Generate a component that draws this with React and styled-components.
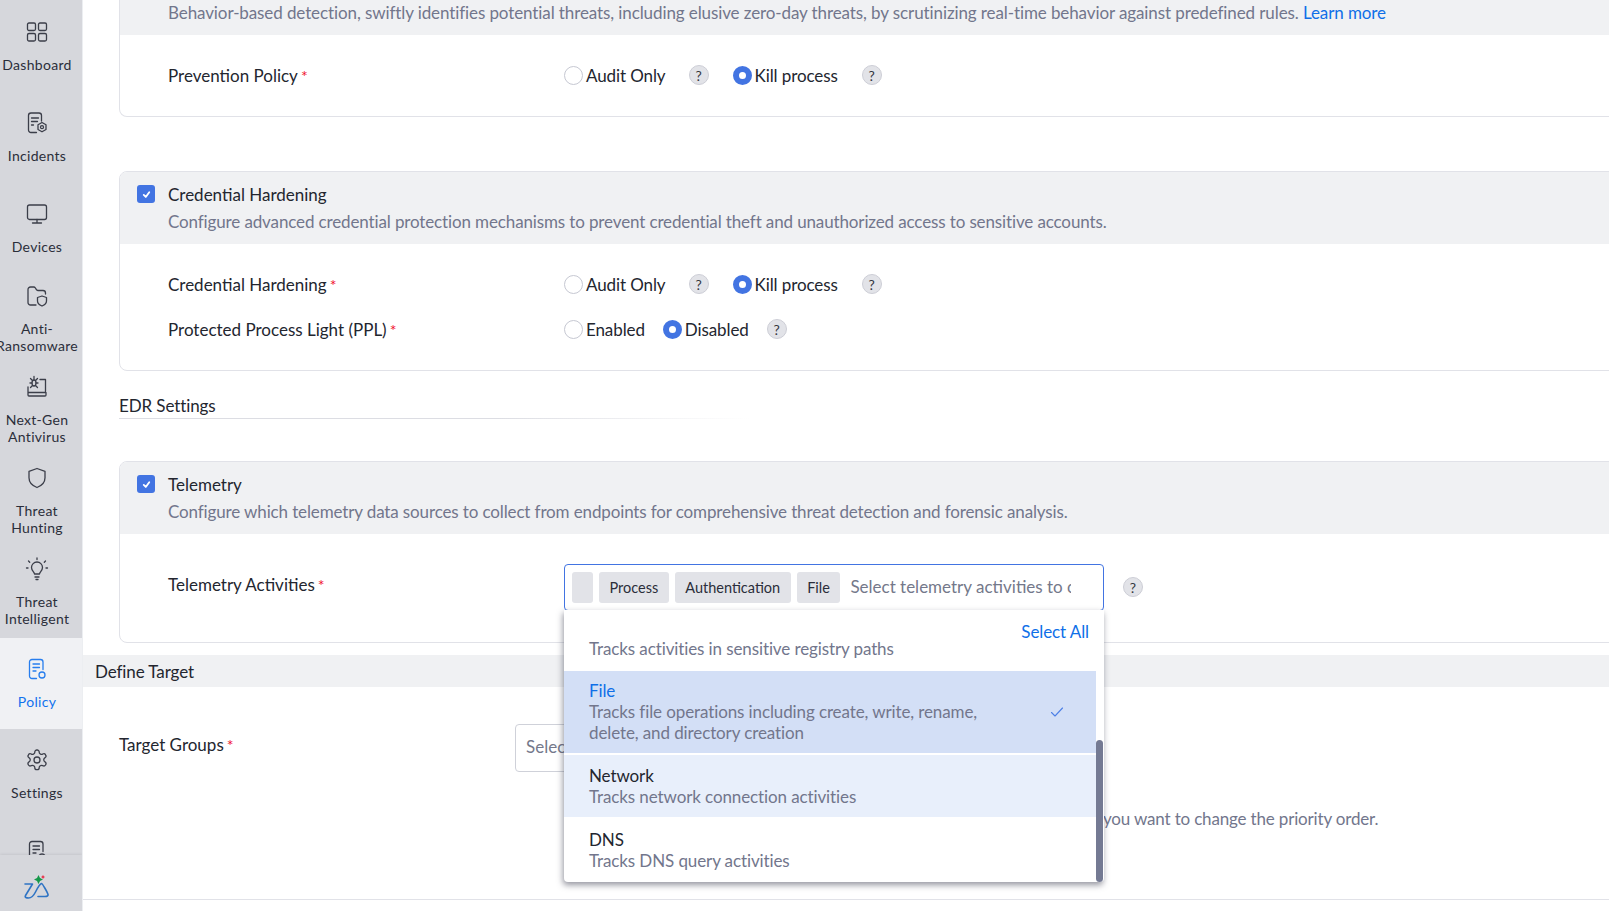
import React from "react";
import styled, { createGlobalStyle } from "styled-components";

const GlobalStyle = createGlobalStyle`
  html, body {
    margin: 0;
    padding: 0;
    background: #fff;
  }
  * {
    box-sizing: border-box;
  }
`;

const Page = styled.div`
  display: flex;
  width: 1609px;
  height: 911px;
  overflow: hidden;
  background: #fff;
  color: #23262f;
  font-family: Lato, "Liberation Sans", sans-serif;
  font-size: 17px;
`;

/* sidebar */
const Sidebar = styled.aside`
  display: flex;
  flex-direction: column;
  flex: 0 0 82px;
  height: 911px;
  background: #d6d7dc;
  overflow: hidden;
`;

const NavList = styled.nav`
  flex: 1;
  min-height: 0;
  padding-top: 1px;
  overflow: hidden;
`;

const NavItem = styled.a`
  display: flex;
  flex-direction: column;
  justify-content: center;
  align-items: center;
  height: 91px;
  padding: 0 8px 1px 0;
  gap: 12px;
  background: ${(p) => (p.$active ? "#f0f1f4" : "transparent")};
  color: ${(p) => (p.$active ? "#1272ee" : "#2b2e3a")};
`;

const NavLabel = styled.span`
  min-height: 17px;
  font-size: 14px;
  line-height: 17px;
  letter-spacing: 0.3px;
  text-align: center;
`;

const NavIcon = styled.svg`
  flex: 0 0 24px;
  width: 24px;
  height: 24px;
  fill: none;
  stroke: currentColor;
  stroke-width: 1.3;
  stroke-linecap: round;
  stroke-linejoin: round;
  opacity: 0.9;
`;

const SideFooter = styled.div`
  display: flex;
  flex: 0 0 56px;
  align-items: center;
  justify-content: center;
  padding: 8px 8px 0 0;
  background: #d6d7dc;
  box-shadow: 0 -1px 2px rgba(90, 92, 110, 0.12);
  position: relative;
`;

/* main */
const Main = styled.main`
  flex: 1;
  min-width: 0;
  overflow: hidden;
  border-left: 1px solid #eceef1;
`;

const Section = styled.div`
  padding-left: 36px;
`;

const Card = styled.section`
  margin: ${(p) => p.$top || "0"} -20px 0 0;
  border: 1px solid #e1e2e8;
  border-top-width: ${(p) => (p.$flush ? "0" : "1px")};
  border-radius: ${(p) => (p.$flush ? "0 0 8px 8px" : "8px")};
`;

const CardHead = styled.header`
  display: flex;
  gap: 13px;
  padding: ${(p) => (p.$flush ? "0 0 10px 48px" : "9px 0 9px 17px")};
  background: #f0f1f3;
  border-radius: ${(p) => (p.$flush ? "0" : "7px 7px 0 0")};
`;

const CheckBox = styled.span`
  display: flex;
  flex: 0 0 18px;
  align-items: center;
  justify-content: center;
  width: 18px;
  height: 18px;
  margin-top: 4px;
  border-radius: 3px;
  background: #4274e2;
`;

const HeadTitle = styled.div`
  font-size: 17px;
  line-height: 27px;
`;

const HeadDesc = styled.div`
  color: #72768c;
  font-size: 17px;
  line-height: ${(p) => (p.$flush ? "25px" : "27px")};
  letter-spacing: ${(p) => (p.$flush ? "-0.1px" : "-0.13px")};
`;

const LearnMore = styled.a`
  color: #0f6fe8;
`;

const CardBody = styled.div`
  display: flex;
  flex-direction: column;
  gap: 15px;
  padding: ${(p) => p.$pad};
`;

const Row = styled.div`
  display: flex;
  align-items: ${(p) => (p.$top ? "flex-start" : "center")};
  min-height: 30px;
  padding-bottom: ${(p) => (p.$top ? "0" : "2px")};
`;

const Label = styled.div`
  flex: 0 0 ${(p) => p.$width || "444px"};
  margin-top: ${(p) => p.$offset || "0"};
  padding-left: ${(p) => p.$indent || "48px"};
  font-size: 17px;
  line-height: 28px;
`;

const Star = styled.span`
  margin-left: 3px;
  color: #f0142f;
  font-size: 16px;
  line-height: 0;
`;

const RadioOption = styled.label`
  display: flex;
  align-items: center;
  gap: 3px;
  padding-bottom: 2px;
  margin-left: ${(p) => p.$gap || "0"};
  letter-spacing: -0.1px;
`;

const RadioDot = styled.span`
  display: block;
  width: 19px;
  height: 19px;
  border-radius: 50%;
  border: ${(p) => (p.$on ? "6.5px solid #4274e2" : "1px solid #c6c8d2")};
  background: #fff;
`;

const Help = styled.span`
  display: flex;
  flex: 0 0 20px;
  align-items: center;
  justify-content: center;
  width: 20px;
  height: 20px;
  margin-top: ${(p) => p.$offset || "-2px"};
  margin-left: ${(p) => p.$gap || "23px"};
  border: 1px solid #cdced6;
  border-radius: 50%;
  background: #e2e3e8;
  font-size: 14px;
  color: #33363f;
`;

const SectionTitle = styled.h3`
  width: 631px;
  height: 25px;
  margin: 23px 0 42px;
  font-size: 17px;
  font-weight: 400;
  line-height: 23px;
  letter-spacing: -0.1px;
  background: linear-gradient(90deg, #dcdde3 60%, #fff) left bottom / 100% 1px no-repeat;
`;

const SelectWrap = styled.div`
  position: relative;
  flex: 0 0 540px;
  width: 540px;
  min-width: 0;
`;

const SelectBox = styled.div`
  display: flex;
  align-items: center;
  gap: 6px;
  height: 47px;
  padding: 0 32px 0 7px;
  border: 1px solid #4274e2;
  border-radius: 4px;
  overflow: hidden;
`;

const Chip = styled.span`
  display: flex;
  flex: 0 0 auto;
  align-items: center;
  height: 31px;
  min-width: 21px;
  padding: 0 10.5px;
  border-radius: 3px;
  background: #e2e3e8;
  font-size: 14.5px;
  color: #2b2e3a;
`;

const Placeholder = styled.span`
  flex: 1;
  min-width: 0;
  margin-left: 4px;
  margin-top: -2px;
  overflow: hidden;
  white-space: nowrap;
  color: #74788a;
`;

const Dropdown = styled.div`
  position: absolute;
  z-index: 5;
  top: 46px;
  left: 0;
  width: 540px;
  height: 272px;
  padding-top: 28px;
  background: #fff;
  border-radius: 0 0 4px 4px;
  box-shadow: -1px 3px 6px rgba(60, 62, 80, 0.55);
`;

const SelectAll = styled.a`
  position: absolute;
  top: 11px;
  right: 15px;
  color: #0f6fe8;
  line-height: 21px;
  letter-spacing: -0.1px;
`;

const Option = styled.div`
  display: flex;
  align-items: center;
  justify-content: space-between;
  width: 532px;
  margin-bottom: 2px;
  padding: ${(p) => p.$pad || "10px 31px 10px 25px"};
  background: ${(p) => p.$bg || "transparent"};
`;

const OptionText = styled.div`
  width: 410px;
  font-size: 17px;
  line-height: 21px;
  letter-spacing: -0.11px;
`;

const OptionTitle = styled.div`
  color: ${(p) => (p.$selected ? "#0f6fe8" : "#23262f")};
`;

const OptionDesc = styled.div`
  color: #72768c;
`;

const ScrollThumb = styled.span`
  position: absolute;
  top: 130px;
  right: 1px;
  bottom: 0;
  width: 7px;
  border-radius: 4px;
  background: #747a93;
`;

const DefineBar = styled.div`
  height: 32px;
  margin-top: 12px;
  padding-left: 12px;
  background: #f0f1f3;
  font-size: 17px;
  line-height: 34px;
  letter-spacing: -0.1px;
`;

const TargetArea = styled.div`
  padding: 37px 0 68px 36px;
  border-bottom: 1px solid #e1e2e8;
`;

const TargetInput = styled.div`
  flex: 0 0 560px;
  height: 48px;
  padding-left: 10px;
  border: 1px solid #cfd1d9;
  border-radius: 4px;
  color: #74788a;
  line-height: 44px;
`;

const Hint = styled.div`
  margin: 35px 0 0 984px;
  color: #72768c;
  line-height: 24px;
  letter-spacing: -0.17px;
`;

const Check = () => (
  <svg width="11" height="11" viewBox="0 0 12 12" fill="none" stroke="#fff" strokeWidth="2" strokeLinecap="round" strokeLinejoin="round">
    <path d="M3 6.500l2.200 2.200L9 3.500" />
  </svg>
);

const icons = {
  dashboard: (
    <>
      <rect x="2.500" y="3" width="8" height="7.500" rx="1.500" />
      <rect x="13.500" y="3" width="8" height="7.500" rx="1.500" />
      <rect x="2.500" y="13.500" width="8" height="7.500" rx="1.500" />
      <rect x="13.500" y="13.500" width="8" height="7.500" rx="1.500" />
    </>
  ),
  incidents: (
    <>
      <path d="M11.500 21.500H6A2.500 2.500 0 0 1 3.500 19V4.500A2.500 2.500 0 0 1 6 2h8A2.500 2.500 0 0 1 16.500 4.500V10" />
      <path d="M6.500 7h7M6.500 10.500h6M6.500 14h2" />
      <path d="M17 11.500l4 2.300v4.700l-4 2.300-4-2.300v-4.700z" />
      <circle cx="17" cy="16.200" r="1.500" />
    </>
  ),
  devices: (
    <>
      <rect x="2.500" y="3" width="19" height="14.500" rx="2" />
      <path d="M12 17.500V21M7.500 21h9" />
    </>
  ),
  folder: (
    <>
      <path d="M11 21H5.500A2.500 2.500 0 0 1 3 18.500v-13A2.500 2.500 0 0 1 5.500 3h3.200c.7 0 1.300.4 1.700 1l1 1.700c.3.5.8.8 1.400.8h5.200A2.500 2.500 0 0 1 20.500 9v1" />
      <path d="M17 12l4.500 1.500v3.500c0 2.500-2 4-4.500 5-2.500-1-4.500-2.500-4.500-5v-3.500z" />
    </>
  ),
  antivirus: (
    <>
      <path d="M15 4.500h5.500v12M3 12v5.500M3 17.500h18v2.500c0 .6-.4 1-1 1H4c-.6 0-1-.4-1-1z" />
      <ellipse cx="9" cy="8" rx="2" ry="3" />
      <path d="M9 1.500v3M5.500 3.500l2 2M12.500 3.500l-2 2M5 8h2M11 8h2M5.500 12.500l2-2M12.500 12.500l-2-2" />
    </>
  ),
  shield: <path d="M12 2.500l8 2.800v6.500c0 4.800-3.500 8-8 9.700-4.500-1.700-8-4.900-8-9.700V5.300z" />,
  bulb: (
    <>
      <path d="M9.500 17c0-2-3-3.200-3-6.500a5.500 5.500 0 0 1 11 0c0 3.300-3 4.500-3 6.500z" />
      <path d="M10 20h4M11 22.500h2M12 1v1.500M3.500 4l1.200 1.200M20.500 4l-1.200 1.200M1.500 11H3M21 11h1.500" />
    </>
  ),
  policy: (
    <>
      <path d="M11.500 21.500H7A2.500 2.500 0 0 1 4.500 19V5A2.500 2.500 0 0 1 7 2.500h8.500A2.500 2.500 0 0 1 18 5v7.500" />
      <path d="M8 7h6.500M8 10.500h6.500M8 14h3" />
      <circle cx="17" cy="18" r="3" />
    </>
  ),
  settings: (
    <>
      <path d="M12.200 2h-.4a2 2 0 0 0-2 2v.2a2 2 0 0 1-1 1.700l-.4.200a2 2 0 0 1-2 0l-.2-.1a2 2 0 0 0-2.700.7l-.2.4a2 2 0 0 0 .7 2.700l.2.100a2 2 0 0 1 1 1.700v.5a2 2 0 0 1-1 1.700l-.2.100a2 2 0 0 0-.7 2.700l.2.400a2 2 0 0 0 2.700.7l.2-.1a2 2 0 0 1 2 0l.4.200a2 2 0 0 1 1 1.700v.2a2 2 0 0 0 2 2h.4a2 2 0 0 0 2-2v-.2a2 2 0 0 1 1-1.700l.4-.200a2 2 0 0 1 2 0l.2.100a2 2 0 0 0 2.700-.7l.2-.4a2 2 0 0 0-.7-2.700l-.2-.1a2 2 0 0 1-1-1.700v-.5a2 2 0 0 1 1-1.700l.2-.1a2 2 0 0 0 .7-2.700l-.2-.4a2 2 0 0 0-2.700-.7l-.2.100a2 2 0 0 1-2 0l-.4-.2a2 2 0 0 1-1-1.700V4a2 2 0 0 0-2-2z" />
      <circle cx="12" cy="12" r="3" />
    </>
  ),
};

const navItems = [
  { icon: "dashboard", label: "Dashboard" },
  { icon: "incidents", label: "Incidents" },
  { icon: "devices", label: "Devices" },
  { icon: "folder", label: "Anti-Ransomware" },
  { icon: "antivirus", label: "Next-Gen Antivirus" },
  { icon: "shield", label: "Threat Hunting" },
  { icon: "bulb", label: "Threat Intelligent" },
  { icon: "policy", label: "Policy", active: true },
  { icon: "settings", label: "Settings" },
  { icon: "policy", label: "" },
];

const Radio = ({ on, gap, children }) => (
  <RadioOption $gap={gap}>
    <RadioDot $on={on} />
    {children}
  </RadioOption>
);

const AuditRow = ({ label }) => (
  <Row>
    <Label>
      {label}
      <Star>*</Star>
    </Label>
    <Radio>Audit Only</Radio>
    <Help>?</Help>
    <Radio on gap="24px">
      Kill process
    </Radio>
    <Help $gap="24px">?</Help>
  </Row>
);

const ZiaLogo = () => (
  <svg width="26" height="25" viewBox="0 0 26 25" fill="none">
    <path
      d="M1 9h7.500L1.500 20.500c-1 2 1 2.500 3 2.500 3 0 5-2 7-6 2-4 4-8 6-8.500 1 0 6 9 6.500 11 .3 1.500-1 2-3 2h-7"
      stroke="#2f74c4"
      strokeWidth="1.600"
      strokeLinecap="round"
      strokeLinejoin="round"
    />
    <path d="M14.500 0l1.500 3 3 1.500-3 1.500-1.500 3-1.500-3-3-1.500 3-1.500z" fill="#16994a" />
    <path d="M19 0l.8 1.200 1.200.8-1.200.8L19 4l-.8-1.200L17 2l1.200-.8z" fill="#e8344a" />
  </svg>
);

export default function App() {
  return (
    <Page>
      <GlobalStyle />
      <Sidebar>
        <NavList>
          {navItems.map((item) => (
            <NavItem key={item.label} $active={item.active}>
              <NavIcon viewBox="0 0 24 24">{icons[item.icon]}</NavIcon>
              <NavLabel>{item.label}</NavLabel>
            </NavItem>
          ))}
        </NavList>
        <SideFooter>
          <ZiaLogo />
        </SideFooter>
      </Sidebar>

      <Main>
        <Section>
          <Card $flush>
            <CardHead $flush>
              <HeadDesc $flush>
                Behavior-based detection, swiftly identifies potential threats, including elusive zero-day threats, by scrutinizing real-time behavior against predefined rules.{" "}
                <LearnMore>Learn more</LearnMore>
              </HeadDesc>
            </CardHead>
            <CardBody $pad="27px 0 24px">
              <AuditRow label="Prevention Policy" />
            </CardBody>
          </Card>

          <Card $top="54px">
            <CardHead>
              <CheckBox>
                <Check />
              </CheckBox>
              <div>
                <HeadTitle>Credential Hardening</HeadTitle>
                <HeadDesc>Configure advanced credential protection mechanisms to prevent credential theft and unauthorized access to sensitive accounts.</HeadDesc>
              </div>
            </CardHead>
            <CardBody $pad="27px 0 24px">
              <AuditRow label="Credential Hardening" />
              <Row>
                <Label>
                  Protected Process Light (PPL)
                  <Star>*</Star>
                </Label>
                <Radio>Enabled</Radio>
                <Radio on gap="18px">
                  Disabled
                </Radio>
                <Help $gap="18px">?</Help>
              </Row>
            </CardBody>
          </Card>

          <SectionTitle>EDR Settings</SectionTitle>

          <Card>
            <CardHead>
              <CheckBox>
                <Check />
              </CheckBox>
              <div>
                <HeadTitle>Telemetry</HeadTitle>
                <HeadDesc>Configure which telemetry data sources to collect from endpoints for comprehensive threat detection and forensic analysis.</HeadDesc>
              </div>
            </CardHead>
            <CardBody $pad="30px 0 31px">
              <Row $top>
                <Label $offset="7px">
                  Telemetry Activities
                  <Star>*</Star>
                </Label>
                <SelectWrap>
                  <SelectBox>
                    <Chip />
                    <Chip>Process</Chip>
                    <Chip>Authentication</Chip>
                    <Chip>File</Chip>
                    <Placeholder>Select telemetry activities to collect</Placeholder>
                  </SelectBox>
                  <Dropdown>
                    <SelectAll>Select All</SelectAll>
                    <Option $pad="0 31px 10px 25px">
                      <OptionText>
                        <OptionDesc>Tracks activities in sensitive registry paths</OptionDesc>
                      </OptionText>
                    </Option>
                    <Option $bg="#d3dff6" $pad="9px 31px 10px 25px">
                      <OptionText>
                        <OptionTitle $selected>File</OptionTitle>
                        <OptionDesc>Tracks file operations including create, write, rename, delete, and directory creation</OptionDesc>
                      </OptionText>
                      <svg width="16" height="16" viewBox="0 0 16 16" fill="none" stroke="#4c7fe6" strokeWidth="1.100" strokeLinecap="round" strokeLinejoin="round">
                        <path d="M2.500 8.500l3.500 3.500 7.500-8" />
                      </svg>
                    </Option>
                    <Option $bg="#e8effb">
                      <OptionText>
                        <OptionTitle>Network</OptionTitle>
                        <OptionDesc>Tracks network connection activities</OptionDesc>
                      </OptionText>
                    </Option>
                    <Option>
                      <OptionText>
                        <OptionTitle>DNS</OptionTitle>
                        <OptionDesc>Tracks DNS query activities</OptionDesc>
                      </OptionText>
                    </Option>
                    <ScrollThumb />
                  </Dropdown>
                </SelectWrap>
                <Help $gap="19px" $offset="13px">
                  ?
                </Help>
              </Row>
            </CardBody>
          </Card>
        </Section>

        <DefineBar>Define Target</DefineBar>

        <TargetArea>
          <Row $top>
            <Label $width="396px" $indent="0" $offset="7px">
              Target Groups
              <Star>*</Star>
            </Label>
            <TargetInput>Select</TargetInput>
          </Row>
          <Hint>you want to change the priority order.</Hint>
        </TargetArea>
      </Main>
    </Page>
  );
}
